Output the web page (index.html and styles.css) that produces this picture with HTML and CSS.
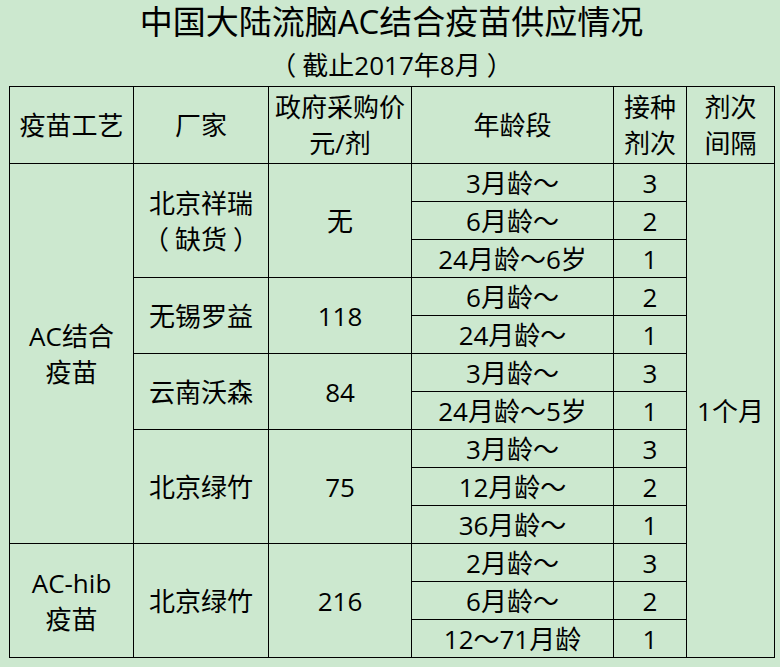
FILE: index.html
```html
<!DOCTYPE html>
<html lang="zh-CN">
<head>
<meta charset="utf-8">
<title>中国大陆流脑AC结合疫苗供应情况</title>
<link rel="stylesheet" href="styles.css">
</head>
<body>
<div class="page">
  <h1 class="title">中国大陆流脑AC结合疫苗供应情况</h1>
  <p class="subtitle">（<span class="pad">截止2017年8月</span>）</p>
  <table class="grid">
    <colgroup>
      <col class="c1"><col class="c2"><col class="c3"><col class="c4"><col class="c5"><col class="c6">
    </colgroup>
    <thead>
      <tr class="head">
        <th>疫苗工艺</th>
        <th>厂家</th>
        <th>政府采购价<br>元/剂</th>
        <th>年龄段</th>
        <th>接种<br>剂次</th>
        <th>剂次<br>间隔</th>
      </tr>
    </thead>
    <tbody>
      <tr>
        <td rowspan="10">AC结合<br>疫苗</td>
        <td rowspan="3">北京祥瑞<br>（<span class="pad">缺货</span>）</td>
        <td rowspan="3">无</td>
        <td>3月龄～</td>
        <td>3</td>
        <td rowspan="13">1个月</td>
      </tr>
      <tr><td>6月龄～</td><td>2</td></tr>
      <tr><td>24月龄～6岁</td><td>1</td></tr>
      <tr>
        <td rowspan="2">无锡罗益</td>
        <td rowspan="2">118</td>
        <td>6月龄～</td><td>2</td>
      </tr>
      <tr><td>24月龄～</td><td>1</td></tr>
      <tr>
        <td rowspan="2">云南沃森</td>
        <td rowspan="2">84</td>
        <td>3月龄～</td><td>3</td>
      </tr>
      <tr><td>24月龄～5岁</td><td>1</td></tr>
      <tr>
        <td rowspan="3">北京绿竹</td>
        <td rowspan="3">75</td>
        <td>3月龄～</td><td>3</td>
      </tr>
      <tr><td>12月龄～</td><td>2</td></tr>
      <tr><td>36月龄～</td><td>1</td></tr>
      <tr>
        <td rowspan="3">AC-hib<br>疫苗</td>
        <td rowspan="3">北京绿竹</td>
        <td rowspan="3">216</td>
        <td>2月龄～</td><td>3</td>
      </tr>
      <tr><td>6月龄～</td><td>2</td></tr>
      <tr><td>12～71月龄</td><td>1</td></tr>
    </tbody>
  </table>
</div>
</body>
</html>
```

FILE: styles.css
```css
html, body {
  margin: 0;
  padding: 0;
  background: #cce8cf;
}
body {
  font-family: "Open Sans", "Noto Sans CJK SC", sans-serif;
  color: #000;
}
.page {
  width: 780px;
  height: 667px;
  padding: 0 0 0 9px;
  box-sizing: border-box;
  overflow: hidden;
}
.title {
  margin: 0;
  width: 765px;
  text-align: center;
  font-size: 33px;
  font-weight: normal;
  line-height: 44px;
}
.subtitle {
  margin: 0;
  width: 765px;
  text-align: center;
  font-size: 26px;
  line-height: 42px;
}
.pad {
  padding: 0 6px;
}
.grid {
  border-collapse: collapse;
  table-layout: fixed;
  width: 765px;
  font-size: 26px;
}
.grid th, .grid td {
  border: 1px solid #000;
  padding: 0;
  text-align: center;
  vertical-align: middle;
  font-weight: normal;
  line-height: 36px;
  white-space: nowrap;
}
.grid tbody tr { height: 38px; }
.grid .head { height: 77px; }
.c1 { width: 124px; }
.c2 { width: 135px; }
.c3 { width: 143px; }
.c4 { width: 202px; }
.c5 { width: 73px; }
.c6 { width: 88px; }
```
